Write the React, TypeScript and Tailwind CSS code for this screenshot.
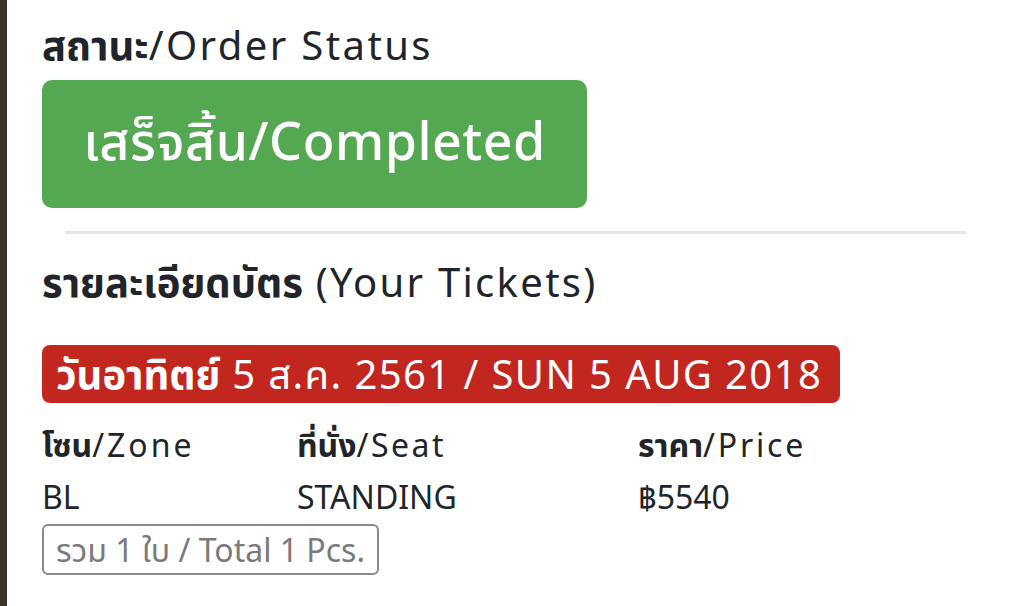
export default function App() {
  return (
    <div
      className="flex h-[606px] w-[1024px] overflow-hidden bg-white text-[#212529]"
      style={{ fontFamily: '"Noto Sans", "Noto Sans Thai", "Noto Sans Thai UI", "Noto Sans CJK SC", sans-serif' }}
    >
      <div className="w-[7px] shrink-0 bg-[#3b3429]" />
      <div className="flex flex-1 flex-col pl-[35px] pr-[58px] pt-[21px]">
        <h2 className="text-[40px] leading-[48px] tracking-[2.4px]">
          <span className="font-bold tracking-normal">สถานะ</span>/Order Status
        </h2>
        <div className="mt-[11px] flex h-[128px] w-[545px] items-center justify-center rounded-[10px] bg-[#55a852] pb-[8px] text-[52px] font-medium tracking-[0.5px] text-white">
          เสร็จสิ้น/Completed
        </div>
        <div className="ml-[23px] mt-[23px] h-[3px] bg-[#e6e6e6]" />
        <h2 className="mt-[21px] text-[40px] leading-[54px] tracking-[2.3px]">
          <span className="font-bold tracking-normal">รายละเอียดบัตร</span> (Your Tickets)
        </h2>
        <div className="mt-[36px] flex h-[58px] w-[798px] items-center rounded-[8px] bg-[#c1271f] pl-[14px] text-[40px] tracking-[1.4px] text-white">
          <span className="font-bold tracking-normal">วันอาทิตย์</span>&nbsp;5 ส.ค. 2561 / SUN 5 AUG 2018
        </div>
        <div className="mt-[16px] grid grid-cols-[255px_341px_1fr] text-[32px] leading-[52px]">
          <div className="tracking-[3px]">
            <span className="font-bold tracking-normal">โซน</span>/Zone
          </div>
          <div className="tracking-[2.5px]">
            <span className="font-bold tracking-normal">ที่นั่ง</span>/Seat
          </div>
          <div className="tracking-[2.8px]">
            <span className="font-bold tracking-normal">ราคา</span>/Price
          </div>
          <div>BL</div>
          <div>STANDING</div>
          <div>฿5540</div>
        </div>
        <div className="mt-[1px] w-fit rounded-[6px] border-2 border-[#8a8a8a] px-[12px] text-[32px] leading-[47px] text-[#7a7a7a]">
          รวม 1 ใบ / Total 1 Pcs.
        </div>
      </div>
    </div>
  );
}
